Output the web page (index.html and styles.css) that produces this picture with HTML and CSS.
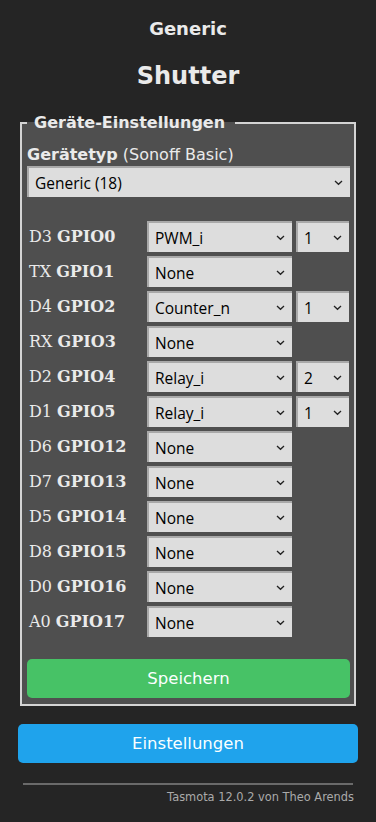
FILE: index.html
```html
<!DOCTYPE html>
<html lang="de">
<head>
<meta charset="utf-8">
<link rel="stylesheet" href="styles.css">
</head>
<body>
<div class="wrap">
  <h3 class="dev">Generic</h3>
  <h2 class="name">Shutter</h2>
  <fieldset class="box">
    <legend class="leg">Geräte-Einstellungen</legend>
    <div class="typ"><b>Gerätetyp</b> (Sonoff Basic)</div>
    <select class="sel sel-wide"><option>Generic (18)</option></select>
    <div class="grid">
      <div class="lbl">D3 <b>GPIO0</b></div>
      <select class="sel"><option>PWM_i</option></select>
      <select class="sel"><option>1</option></select>

      <div class="lbl">TX <b>GPIO1</b></div>
      <select class="sel"><option>None</option></select>
      <div></div>

      <div class="lbl">D4 <b>GPIO2</b></div>
      <select class="sel"><option>Counter_n</option></select>
      <select class="sel"><option>1</option></select>

      <div class="lbl">RX <b>GPIO3</b></div>
      <select class="sel"><option>None</option></select>
      <div></div>

      <div class="lbl">D2 <b>GPIO4</b></div>
      <select class="sel"><option>Relay_i</option></select>
      <select class="sel"><option>2</option></select>

      <div class="lbl">D1 <b>GPIO5</b></div>
      <select class="sel"><option>Relay_i</option></select>
      <select class="sel"><option>1</option></select>

      <div class="lbl">D6 <b>GPIO12</b></div>
      <select class="sel"><option>None</option></select>
      <div></div>

      <div class="lbl">D7 <b>GPIO13</b></div>
      <select class="sel"><option>None</option></select>
      <div></div>

      <div class="lbl">D5 <b>GPIO14</b></div>
      <select class="sel"><option>None</option></select>
      <div></div>

      <div class="lbl">D8 <b>GPIO15</b></div>
      <select class="sel"><option>None</option></select>
      <div></div>

      <div class="lbl">D0 <b>GPIO16</b></div>
      <select class="sel"><option>None</option></select>
      <div></div>

      <div class="lbl">A0 <b>GPIO17</b></div>
      <select class="sel"><option>None</option></select>
      <div></div>
    </div>
    <button class="btn btn-save">Speichern</button>
  </fieldset>
  <button class="btn btn-cfg">Einstellungen</button>
  <div class="rule"></div>
  <div class="foot">Tasmota 12.0.2 von Theo Arends</div>
</div>
</body>
</html>
```

FILE: styles.css
```css
html, body {
  margin: 0;
  padding: 0;
  background: #252525;
}
body {
  font-family: "DejaVu Sans", Verdana, sans-serif;
  color: #eaeaea;
}
.wrap {
  width: 340px;
  margin: 0 auto;
  padding-top: 18px;
}
.dev {
  margin: 0;
  text-align: center;
  font-size: 18px;
  font-weight: bold;
  line-height: 22px;
}
.name {
  margin: 21px 0 0;
  text-align: center;
  font-size: 24px;
  font-weight: bold;
  line-height: 30px;
}
.box {
  margin: 22px 2px 0;
  padding: 0 4px 6px 5px;
  border: 2px solid #d4d4d4;
  background: #4f4f4f;
  min-width: 0;
}
.leg {
  margin-left: 0;
  padding: 0 10px 0 7px;
  font-size: 16px;
  font-weight: bold;
  line-height: 20px;
}
.typ {
  margin-top: 12px;
  font-size: 16px;
  line-height: 20px;
}
.sel {
  -webkit-appearance: none;
  appearance: none;
  display: block;
  box-sizing: border-box;
  width: 100%;
  height: 31px;
  margin: 0;
  padding: 0 20px 0 6px;
  font-family: "Open Sans", "Noto Sans", sans-serif;
  font-size: 15.5px;
  color: #000;
  background-color: #dddddd;
  background-image: url("data:image/svg+xml,%3Csvg xmlns='http://www.w3.org/2000/svg' width='9' height='6' viewBox='0 0 9 6'%3E%3Cpath d='M1 1l3.5 3.3L8 1' fill='none' stroke='%23222' stroke-width='1.3'/%3E%3C/svg%3E");
  background-repeat: no-repeat;
  background-position: right 7px center;
  border: 0;
  border-top: 2px solid #a9a9a9;
  border-left: 2px solid #a9a9a9;
  border-radius: 0;
}
.sel-wide {
  margin-top: 1px;
}
.grid {
  display: grid;
  grid-template-columns: 116px 145px 53px;
  column-gap: 4px;
  row-gap: 4px;
  margin-top: 24px;
}
.lbl {
  align-self: center;
  font-family: "DejaVu Serif", Georgia, serif;
  font-size: 16px;
  line-height: 20px;
  padding-left: 2px;
  white-space: nowrap;
  color: #eaeaea;
}
.btn {
  display: block;
  width: 100%;
  border: 0;
  border-radius: 5px;
  font-family: "DejaVu Sans", Verdana, sans-serif;
  font-size: 16.5px;
  color: #faffff;
  height: 39px;
  padding: 0;
}
.btn-save {
  margin-top: 22px;
  background: #47c266;
}
.btn-cfg {
  margin-top: 18px;
  background: #1fa3ec;
}
.rule {
  margin: 20px 5px 0;
  height: 2px;
  background: #6a6a6a;
}
.foot {
  text-align: right;
  padding-right: 4px;
  margin-top: 5px;
  font-size: 11.4px;
  line-height: 14px;
  color: #aaaaaa;
}
```
